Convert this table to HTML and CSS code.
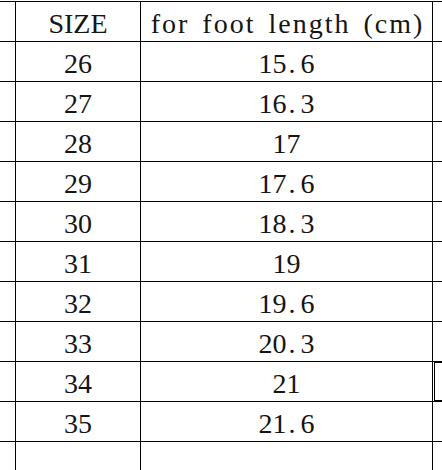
FILE: index.html
```html
<!DOCTYPE html>
<html>
<head>
<meta charset="utf-8">
<link rel="stylesheet" href="styles.css">
</head>
<body>
<div class="sheet">
  <div class="cell"></div><div class="cell">SIZE</div><div class="cell head">for foot length (cm)</div><div class="cell"></div>
  <div class="cell"></div><div class="cell">26</div><div class="cell">15<span class="dot">.</span>6</div><div class="cell"></div>
  <div class="cell"></div><div class="cell">27</div><div class="cell">16<span class="dot">.</span>3</div><div class="cell"></div>
  <div class="cell"></div><div class="cell">28</div><div class="cell">17</div><div class="cell"></div>
  <div class="cell"></div><div class="cell">29</div><div class="cell">17<span class="dot">.</span>6</div><div class="cell"></div>
  <div class="cell"></div><div class="cell">30</div><div class="cell">18<span class="dot">.</span>3</div><div class="cell"></div>
  <div class="cell"></div><div class="cell">31</div><div class="cell">19</div><div class="cell"></div>
  <div class="cell"></div><div class="cell">32</div><div class="cell">19<span class="dot">.</span>6</div><div class="cell"></div>
  <div class="cell"></div><div class="cell">33</div><div class="cell">20<span class="dot">.</span>3</div><div class="cell"></div>
  <div class="cell"></div><div class="cell">34</div><div class="cell">21</div><div class="cell selected"></div>
  <div class="cell"></div><div class="cell">35</div><div class="cell">21<span class="dot">.</span>6</div><div class="cell"></div>
  <div class="cell"></div><div class="cell"></div><div class="cell"></div><div class="cell"></div>
</div>
</body>
</html>
```
FILE: styles.css
```css
html, body {
  margin: 0;
  padding: 0;
  background: #ffffff;
  overflow: hidden;
  width: 442px;
  height: 470px;
}
.sheet {
  margin-top: 1px;
  display: grid;
  grid-template-columns: 15px 124px 291px 1fr;
  grid-template-rows: repeat(11, 39px) 40px;
  gap: 1px;
  background: #000;
  border-top: 1px solid #000;
  width: 442px;
  height: 469px;
  box-sizing: border-box;
  overflow: hidden;
}
.cell {
  background: #fff;
  font-family: "Liberation Serif", "Times New Roman", serif;
  font-size: 28px;
  color: #151515;
  display: flex;
  align-items: center;
  justify-content: center;
  padding-top: 5px;
  box-sizing: border-box;
  white-space: nowrap;
  position: relative;
  min-width: 0;
}
.head {
  letter-spacing: 2px;
  word-spacing: 4px;
  padding-left: 2px;
}
.dot {
  display: inline-block;
  width: 0.5em;
  text-align: left;
  padding-left: 2px;
  box-sizing: border-box;
}
.selected {
  overflow: hidden;
}
.selected::after {
  content: "";
  position: absolute;
  left: 1px;
  top: 0;
  right: -4px;
  bottom: 0;
  border: 1px solid #000;
}
```
